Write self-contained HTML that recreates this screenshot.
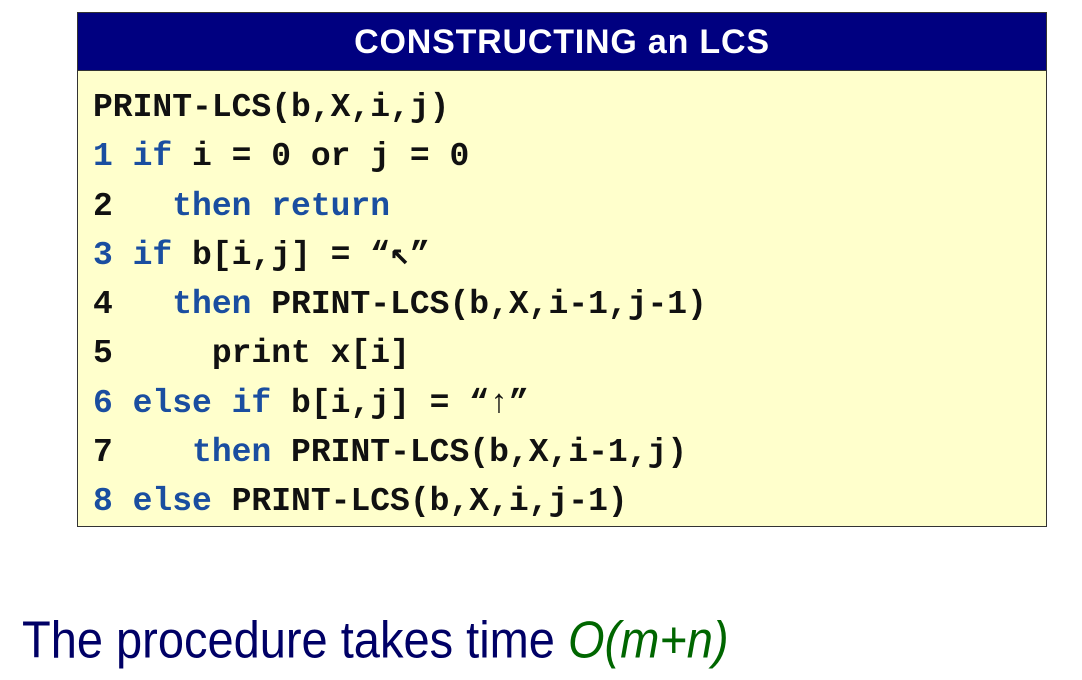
<!DOCTYPE html>
<html><head><style>
body{margin:0;width:1082px;height:680px;background:#fff;position:relative;overflow:hidden}
.box{position:absolute;left:77px;top:12px;width:968px;height:513px;border:1px solid #333;background:#ffffcc}
.hd{height:57px;background:#000080;color:#fff;font:bold 34px "Liberation Sans",sans-serif;text-align:center;line-height:58px;letter-spacing:0.8px;border-bottom:1px solid #333}
pre{margin:0;position:absolute;left:15px;top:70px;font:bold 33px/49.3px "Liberation Mono",monospace;color:#111}
.k{color:#1a4ea0}
.t{position:absolute;left:22px;top:612px;font:47px "Liberation Sans",sans-serif;color:#000066;white-space:nowrap;transform:scaleY(1.1);transform-origin:left}
.g{color:#006600;font-style:italic}
</style></head><body>
<div class="box"><div class="hd">CONSTRUCTING an LCS</div>
<pre>PRINT-LCS(b,X,i,j)
<span class="k">1 if</span> i = 0 or j = 0
2   <span class="k">then return</span>
<span class="k">3 if</span> b[i,j] = “↖”
4   <span class="k">then</span> PRINT-LCS(b,X,i-1,j-1)
5     print x[i]
<span class="k">6 else if</span> b[i,j] = “↑”
7    <span class="k">then</span> PRINT-LCS(b,X,i-1,j)
<span class="k">8 else</span> PRINT-LCS(b,X,i,j-1)</pre></div>
<div class="t">The procedure takes time <span class="g">O(m+n)</span></div>
</body></html>
